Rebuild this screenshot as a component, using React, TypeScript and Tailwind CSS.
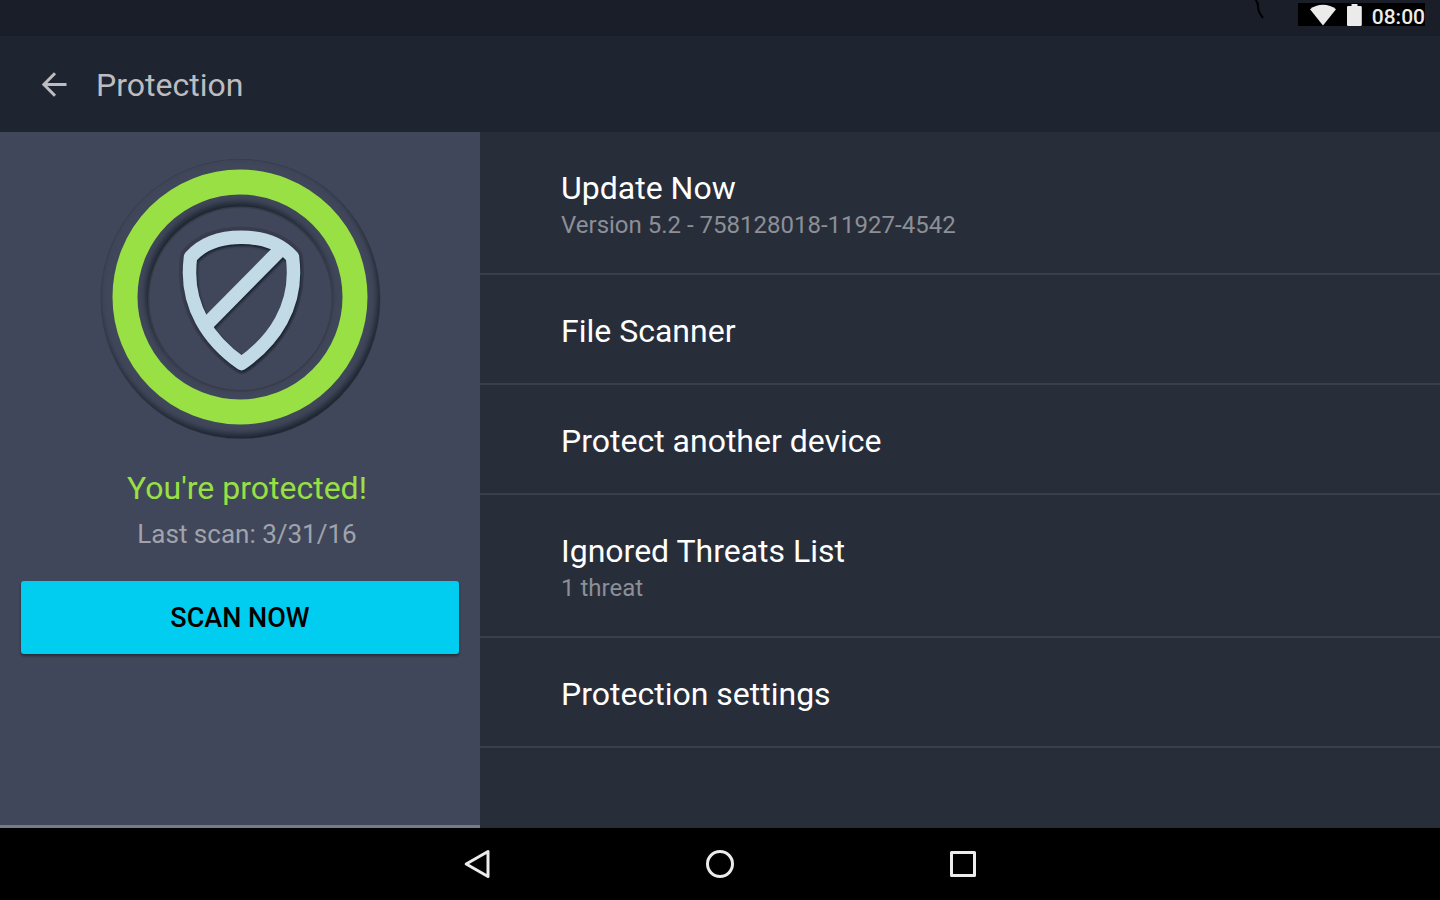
import type { ReactNode } from "react"

// Entries of the protection menu
const menuItems = [
  { id: "update", title: "Update Now", subtitle: "Version 5.2 - 758128018-11927-4542" },
  { id: "scanner", title: "File Scanner" },
  { id: "device", title: "Protect another device" },
  { id: "ignored", title: "Ignored Threats List", subtitle: "1 threat" },
  { id: "settings", title: "Protection settings" },
]

const shieldPath =
  "M141.5 219.5C105 194 89.5 161 89.5 129Q89.5 121 90.5 113C103 99 122 93.3 141.5 93.3C161 93.3 180 99 192.5 113Q193.5 121 193.5 129C193.5 161 178 194 141.5 219.5Z"

function StatusBar() {
  return (
    <div className="flex h-9 items-start justify-end bg-[#191e28]">
      <svg width="12" height="20" viewBox="0 0 12 20" className="mr-8" fill="none" stroke="#000" strokeWidth="2">
        <path d="M1.500 0C5 3 3.500 6 4.500 10C5.500 14 7 15 9 18" />
      </svg>
      <div className="mt-[3px] mr-[15px] flex h-[23px] items-center bg-black pl-3 text-[#ebebeb]">
        <svg width="26" height="22" viewBox="0 0 26 22" fill="currentColor" aria-label="Wi-Fi">
          <path d="M13 21.500L0 5.300C3.600 2.400 8 .8 13 .8S22.400 2.400 26 5.300Z" />
        </svg>
        <svg width="15" height="22" viewBox="0 0 15 22" className="ml-[11px]" fill="currentColor" aria-label="Battery">
          <path d="M4.500 0H10.500V2H13.500Q14.800 2 14.800 3.300V20.700Q14.800 22 13.500 22H1.300Q0 22 0 20.700V3.300Q0 2 1.300 2H4.500Z" />
        </svg>
        <span className="mt-1 ml-[10px] text-[21px] leading-6 font-medium">08:00</span>
      </div>
    </div>
  )
}

function Toolbar() {
  return (
    <header className="flex h-24 items-center bg-[#1f2530] pl-[42px] text-[#bdbdc0]">
      <button type="button" aria-label="Back">
        <svg width="25" height="25" viewBox="0 0 25 25" fill="none" stroke="currentColor" strokeWidth="3">
          <path d="M24.500 12.500H2.500M13 1.200L1.900 12.500L13 23.800" />
        </svg>
      </button>
      <h1 className="mt-[2px] ml-[29px] text-[32px] leading-10">Protection</h1>
    </header>
  )
}

function ProtectionBadge() {
  return (
    <svg width="284" height="288" viewBox="0 0 284 288" fill="none" role="img" aria-label="Protected">
      <defs>
        <filter id="groove" x="-25%" y="-25%" width="150%" height="150%" colorInterpolationFilters="sRGB">
          <feComponentTransfer in="SourceAlpha" result="outside">
            <feFuncA type="table" tableValues="1 0" />
          </feComponentTransfer>
          <feGaussianBlur in="outside" stdDeviation="3" />
          <feOffset dx="-2" dy="-4" result="blurred" />
          <feFlood floodColor="#17222b" floodOpacity="0.95" />
          <feComposite in2="blurred" operator="in" />
          <feComposite in2="SourceAlpha" operator="in" result="shade" />
          <feMerge>
            <feMergeNode in="SourceGraphic" />
            <feMergeNode in="shade" />
          </feMerge>
        </filter>
        <filter id="shieldShade" x="-20%" y="-20%" width="140%" height="140%">
          <feGaussianBlur stdDeviation="1" />
        </filter>
      </defs>
      <circle cx="142.500" cy="145" r="139" stroke="#3a3b49" strokeWidth="2" />
      <circle cx="142.500" cy="145" r="92" stroke="#3b3c4a" strokeWidth="2" />
      <g filter="url(#groove)">
        <circle cx="142.500" cy="145" r="116" stroke="#40475a" strokeWidth="47" />
      </g>
      <circle cx="142" cy="143" r="115" stroke="#99e044" strokeWidth="25" />
      <g transform="translate(2 -10)">
        <g strokeLinejoin="round">
          <path d={shieldPath} stroke="#393c4d" strokeWidth="21" />
          <path d={shieldPath} fill="#40475a" />
          <g filter="url(#shieldShade)" stroke="#18242d">
            <path d={shieldPath} strokeWidth="13.500" transform="translate(1 2)" />
            <path d="M106 181L183 103" strokeWidth="14" transform="translate(1 2)" />
          </g>
          <path d={shieldPath} stroke="#c2dae6" strokeWidth="13.500" />
          <path d="M106 181L185 101" stroke="#c2dae6" strokeWidth="14" />
        </g>
      </g>
    </svg>
  )
}

function StatusPanel() {
  return (
    <section className="flex w-1/3 flex-col items-center border-b-[3px] border-[#757a8a] bg-[#40475a] px-[21px] pt-[22px]">
      <ProtectionBadge />
      <p className="mt-[26px] pl-[14px] text-[32px] leading-10 text-[#99e044]">You're protected!</p>
      <p className="mt-[10px] pl-[14px] text-[26px] leading-8 text-[#a0a3ac]">Last scan: 3/31/16</p>
      <button
        type="button"
        className="mt-[31px] h-[73px] w-full rounded-[3px] bg-[#00cdf0] pt-[2px] text-[27px] font-medium text-black shadow-[0_2px_3px_rgba(0,0,0,0.4)]"
      >
        SCAN NOW
      </button>
    </section>
  )
}

function MenuList() {
  return (
    <ul className="flex-1 bg-[#282d3a]">
      {menuItems.map((item) => (
        <li key={item.id} className="border-b-2 border-[#3a3f4c]">
          <button type="button" className="block w-full pt-[38px] pb-[34px] pl-[81px] text-left">
            <span className="block text-[32px] leading-9 text-white">{item.title}</span>
            {item.subtitle && (
              <span className="mt-[5px] block text-[24px] leading-7 text-[#8c8f96]">{item.subtitle}</span>
            )}
          </button>
        </li>
      ))}
    </ul>
  )
}

function NavButton({ label, children }: { label: string; children: ReactNode }) {
  return (
    <button type="button" aria-label={label} className="flex w-[243px] items-center justify-center">
      <svg width="30" height="30" viewBox="0 0 30 30" fill="none" stroke="#ececec" strokeWidth="3" strokeLinejoin="round">
        {children}
      </svg>
    </button>
  )
}

function NavBar() {
  return (
    <nav className="flex h-[72px] justify-center bg-black">
      <NavButton label="Back">
        <path d="M4.200 15L26 2.500V27.500Z" />
      </NavButton>
      <NavButton label="Home">
        <circle cx="15" cy="15" r="12.500" />
      </NavButton>
      <NavButton label="Recent apps">
        <rect x="3.500" y="3.500" width="23" height="23" />
      </NavButton>
    </nav>
  )
}

export default function App() {
  return (
    <div className="flex min-h-screen flex-col bg-black font-[Roboto,sans-serif]">
      <StatusBar />
      <Toolbar />
      <main className="flex flex-1">
        <StatusPanel />
        <MenuList />
      </main>
      <NavBar />
    </div>
  )
}
